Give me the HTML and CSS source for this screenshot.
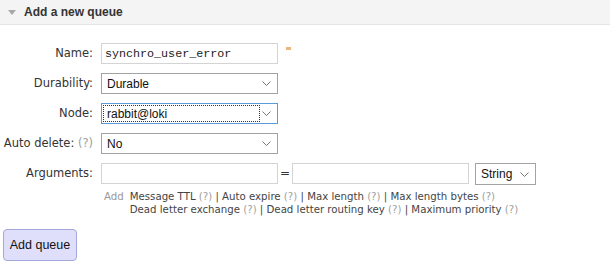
FILE: index.html
```html
<!DOCTYPE html>
<html lang="en">
<head>
    <meta charset="UTF-8">
    <title>Add a new queue</title>
    <link rel="stylesheet" href="styles.css">
</head>
<body>
    <div class="section">
        <h2 class="section-head"><span class="tri"></span>Add a new queue</h2>

        <form class="queue-form" action="#" method="post">
            <div class="form-grid">
                <label class="lbl">Name:</label>
                <div class="field">
                    <input class="txt mono" type="text" name="name" value="synchro_user_error">
                    <span class="req"></span>
                </div>

                <label class="lbl">Durability:</label>
                <div class="field">
                    <select class="sel wide" name="durable">
                        <option>Durable</option>
                        <option>Transient</option>
                    </select>
                </div>

                <label class="lbl">Node:</label>
                <div class="field">
                    <span class="focus-wrap">
                        <select class="sel wide focused" name="node">
                            <option>rabbit@loki</option>
                        </select>
                    </span>
                </div>

                <label class="lbl">Auto delete: <span class="help">(?)</span></label>
                <div class="field">
                    <select class="sel wide" name="auto_delete">
                        <option>No</option>
                        <option>Yes</option>
                    </select>
                </div>

                <label class="lbl">Arguments:</label>
                <div class="field args">
                    <div class="arg-row">
                        <input class="txt" type="text" name="arguments_1_mfkey">
                        <span class="eq">=</span>
                        <input class="txt" type="text" name="arguments_1_mfvalue">
                        <select class="sel short" name="arguments_1_mfvalue_type">
                            <option>String</option>
                            <option>Number</option>
                            <option>Boolean</option>
                        </select>
                    </div>
                    <div class="arg-help">
                        <span class="add">Add</span>
                        <span class="links">
                            Message TTL <span class="help">(?)</span> | Auto expire <span class="help">(?)</span> | Max length <span class="help">(?)</span> | Max length bytes <span class="help">(?)</span><br>
                            Dead letter exchange <span class="help">(?)</span> | Dead letter routing key <span class="help">(?)</span> | Maximum priority <span class="help">(?)</span>
                        </span>
                    </div>
                </div>
            </div>

            <button class="btn" type="submit">Add queue</button>
        </form>
    </div>
</body>
</html>
```

FILE: styles.css
```css
body {
    margin: 0;
    font-family: "DejaVu Sans", Verdana, sans-serif;
    font-size: 11px;
    color: #333;
    background: #fff;
}
.section-head {
    margin: 0;
    height: 24px;
    display: flex;
    align-items: center;
    gap: 8px;
    padding-left: 8px;
    background: #f4f4f4;
    border-bottom: 1px solid #e6e6e6;
    font-family: "Liberation Sans", Arial, sans-serif;
    font-size: 12px;
    font-weight: bold;
    color: #333;
}
.tri {
    width: 0;
    height: 0;
    border-left: 4px solid transparent;
    border-right: 4px solid transparent;
    border-top: 5px solid #a8a8a8;
}
.queue-form {
    padding: 18px 3px 0;
}
.form-grid {
    display: grid;
    grid-template-columns: 90px auto;
    column-gap: 8px;
    row-gap: 9px;
    align-items: start;
}
.lbl {
    text-align: right;
    font-size: 11.5px;
    line-height: 21px;
    white-space: nowrap;
}
.help {
    color: #a0a0a0;
}
.field {
    display: flex;
    align-items: flex-start;
    gap: 8px;
}
.txt {
    box-sizing: border-box;
    width: 177px;
    height: 21px;
    margin: 0;
    padding: 1px 3px;
    border: 1px solid #d4d4d4;
    border-radius: 0;
    font-family: "Liberation Sans", Arial, sans-serif;
    font-size: 12px;
    color: #222;
}
.mono {
    font-family: "Liberation Mono", "Courier New", monospace;
    font-size: 11.7px;
}
.req {
    width: 5px;
    height: 3px;
    margin-top: 4px;
    background: #eab57e;
}
.sel {
    box-sizing: border-box;
    height: 21px;
    margin: 0;
    padding: 0 20px 0 5px;
    border: 1px solid #a3a3a3;
    border-radius: 0;
    -webkit-appearance: none;
    appearance: none;
    background: #fff url("data:image/svg+xml,%3Csvg xmlns='http://www.w3.org/2000/svg' width='9' height='5'%3E%3Cpath d='M0.5 0.5L4.5 4.5L8.5 0.5' fill='none' stroke='%23777' stroke-width='1'/%3E%3C/svg%3E") no-repeat right 6px center;
    font-family: "Liberation Sans", Arial, sans-serif;
    font-size: 12px;
    color: #111;
}
.wide {
    width: 177px;
}
.short {
    width: 61px;
    height: 22px;
}
.focused {
    border-color: #5b9bd9;
}
.focus-wrap {
    position: relative;
    display: inline-block;
    height: 21px;
}
.focus-wrap::after {
    content: "";
    position: absolute;
    left: 2px;
    top: 2px;
    width: 155px;
    height: 15px;
    border: 1px dotted #333;
    pointer-events: none;
}
.args {
    flex-direction: column;
    gap: 5px;
}
.arg-row {
    display: flex;
    align-items: flex-start;
    gap: 0;
}
.eq {
    width: 14px;
    text-align: center;
    line-height: 21px;
    font-size: 12px;
}
.arg-row .sel {
    margin-left: 6px;
}
.arg-help {
    display: flex;
    gap: 6px;
    padding-left: 3px;
    font-size: 10.2px;
    line-height: 13px;
    color: #444;
}
.add {
    color: #999;
}
.btn {
    margin-top: 13px;
    width: 74px;
    height: 32px;
    padding: 0;
    border: 1px solid #a3a9dc;
    border-radius: 4px;
    background: #dfdffc;
    font-family: "Liberation Sans", Arial, sans-serif;
    font-size: 12.5px;
    color: #111;
    cursor: pointer;
}
```
